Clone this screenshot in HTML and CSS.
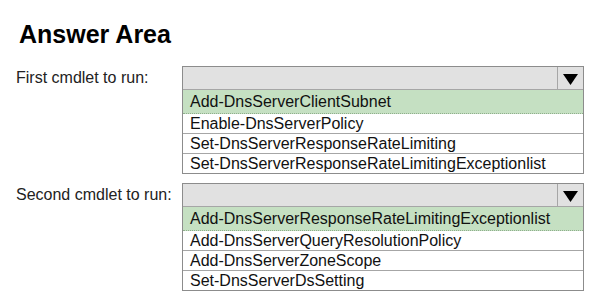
FILE: index.html
```html
<!DOCTYPE html>
<html lang="en">
<head>
  <meta charset="UTF-8">
  <title>Answer Area</title>
  <link rel="stylesheet" href="styles.css">
</head>
<body>

  <h1>Answer Area</h1>

  <div class="pregunta primera">
    <label>First cmdlet to run:</label>
    <div class="lista">
      <div class="cabecera">
        <span class="vacio"></span>
        <span class="flecha">
          <svg width="15" height="11" viewBox="0 0 15 11"><polygon points="0,0 15,0 7.5,11" fill="#000"/></svg>
        </span>
      </div>
      <div class="opcion elegida">Add-DnsServerClientSubnet</div>
      <div class="opcion">Enable-DnsServerPolicy</div>
      <div class="opcion">Set-DnsServerResponseRateLimiting</div>
      <div class="opcion">Set-DnsServerResponseRateLimitingExceptionlist</div>
    </div>
  </div>

  <div class="pregunta segunda">
    <label>Second cmdlet to run:</label>
    <div class="lista">
      <div class="cabecera">
        <span class="vacio"></span>
        <span class="flecha">
          <svg width="15" height="11" viewBox="0 0 15 11"><polygon points="0,0 15,0 7.5,11" fill="#000"/></svg>
        </span>
      </div>
      <div class="opcion elegida">Add-DnsServerResponseRateLimitingExceptionlist</div>
      <div class="opcion">Add-DnsServerQueryResolutionPolicy</div>
      <div class="opcion">Add-DnsServerZoneScope</div>
      <div class="opcion">Set-DnsServerDsSetting</div>
    </div>
  </div>

</body>
</html>
```

FILE: styles.css
```css
body {
  margin: 0;
  font-family: 'Liberation Sans', Arial, sans-serif;
  background-color: #ffffff;
  color: #111;
}

h1 {
  margin: 20px 0 0 19px;
  font-size: 25px;
  line-height: 28px;
  font-weight: bold;
  color: #000;
}

.pregunta {
  display: grid;
  grid-template-columns: 166px 402px;
  padding-left: 16px;
  font-size: 16px;
}

.primera {
  margin-top: 18px;
}

.segunda {
  margin-top: 9px;
}

.pregunta label {
  line-height: 23px;
  color: #222;
}

.lista {
  border: 1px solid #8c8c8c;
}

.cabecera {
  display: flex;
  height: 22px;
  background-color: #e1e1e1;
  border-bottom: 1px solid #a6a6a6;
}

.vacio {
  flex: 1;
}

.flecha {
  width: 25px;
  border-left: 1px solid #a6a6a6;
  display: flex;
  justify-content: center;
  align-items: center;
  padding-top: 2px;
}

.flecha svg {
  display: block;
}

.opcion {
  height: 19px;
  line-height: 19px;
  padding-left: 7px;
  border-bottom: 1px solid #a6a6a6;
  white-space: nowrap;
}

.opcion:last-child {
  border-bottom: none;
}

.elegida {
  height: 23px;
  line-height: 24px;
  background-color: #c5e0c2;
  border-bottom: 1px dotted #8fae8c;
}
```
